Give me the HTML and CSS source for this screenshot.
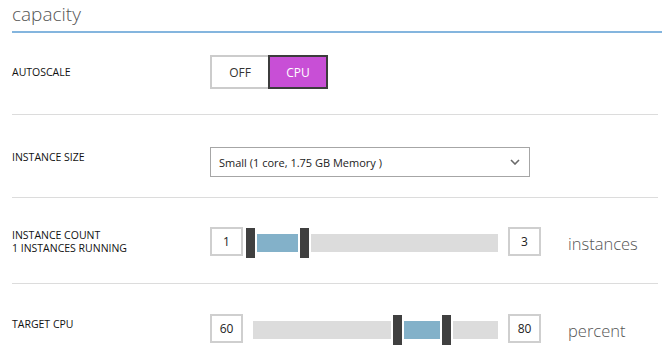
FILE: index.html
```html
<!DOCTYPE html>
<html lang="en">

<head>
    <meta charset="UTF-8">
    <meta name="viewport" content="width=device-width, initial-scale=1.0">
    <title>Capacity</title>
    <link rel="stylesheet" href="styles.css">
</head>

<body>
    <h1 class="section-title">capacity</h1>

    <div class="row row-autoscale">
        <div class="label">AUTOSCALE</div>
        <div class="toggle">
            <button class="toggle-option">OFF</button>
            <button class="toggle-option active">CPU</button>
        </div>
    </div>

    <div class="row row-size">
        <div class="label">INSTANCE SIZE</div>
        <div class="select">
            <span>Small (1 core, 1.75 GB Memory )</span>
            <svg class="chevron" width="10" height="6" viewBox="0 0 10 6">
                <path d="M1 1 L5 5 L9 1" fill="none" stroke="#6a6a6a" stroke-width="1.6" />
            </svg>
        </div>
    </div>

    <div class="row row-count">
        <div class="label">INSTANCE COUNT<br>1 INSTANCES RUNNING</div>
        <div class="range">
            <div class="range-value">1</div>
            <div class="range-track">
                <div class="range-fill" style="left: 4px; width: 41px"></div>
                <div class="range-handle" style="left: -7px"></div>
                <div class="range-handle" style="left: 47px"></div>
            </div>
            <div class="range-value">3</div>
            <div class="range-unit">instances</div>
        </div>
    </div>

    <div class="row row-cpu">
        <div class="label">TARGET CPU</div>
        <div class="range">
            <div class="range-value">60</div>
            <div class="range-track">
                <div class="range-fill" style="left: 151px; width: 36px"></div>
                <div class="range-handle" style="left: 140px"></div>
                <div class="range-handle" style="left: 189px"></div>
            </div>
            <div class="range-value">80</div>
            <div class="range-unit">percent</div>
        </div>
    </div>
</body>

</html>
```

FILE: styles.css
```css
body {
    margin: 0;
    font-family: "Open Sans", "Noto Sans", sans-serif;
    color: #333;
    background: #fff;
}

.section-title {
    margin: 0 0 0 12px;
    height: 31px;
    border-bottom: 2px solid #84b5de;
    font-size: 19px;
    font-weight: 300;
    line-height: 28px;
    color: #555;
}

.row {
    display: flex;
    margin: 0 4px 0 12px;
    border-bottom: 1px solid #dcdcdc;
}

.row-autoscale {
    align-items: center;
    padding: 22px 0 25px;
}

.row-size {
    padding: 32px 0 20px;
}

.row-count {
    padding: 29px 0 25px;
}

.row-cpu {
    padding: 30px 0 25px;
}

.label {
    width: 198px;
    flex: none;
    font-size: 10.5px;
    line-height: 13px;
    color: #111;
}

.row-size .label {
    padding-top: 4px;
}

.row-count .label {
    padding-top: 2px;
}

.row-cpu .label {
    padding-top: 4px;
}

/* toggle */

.toggle {
    display: flex;
    height: 34px;
}

.toggle-option {
    font-family: inherit;
    font-size: 12px;
    color: #333;
    background: #fff;
    border: 2px solid #cccccc;
    border-right: none;
    width: 58px;
    padding: 0;
    margin: 0;
}

.toggle-option.active {
    width: 60px;
    color: #fff;
    background: #c84fd6;
    border: 2px solid #3c3c3c;
}

/* dropdown */

.select {
    display: flex;
    align-items: center;
    justify-content: space-between;
    box-sizing: border-box;
    width: 320px;
    height: 30px;
    padding: 0 9px 0 8px;
    border: 1px solid #a6a6a6;
    font-size: 11px;
    color: #222;
}

/* range slider */

.range {
    display: flex;
    align-items: flex-start;
}

.range-value {
    box-sizing: border-box;
    width: 33px;
    height: 29px;
    border: 2px solid #cfcfcf;
    font-size: 12px;
    line-height: 25px;
    text-align: center;
    color: #222;
}

.range-track {
    position: relative;
    width: 245px;
    height: 30px;
    margin: 1px 10px 0;
}

.range-track::before {
    content: "";
    position: absolute;
    left: 0;
    right: 0;
    top: 6px;
    height: 18px;
    background: #dcdcdc;
}

.range-fill {
    position: absolute;
    top: 6px;
    height: 18px;
    background: #83b1c9;
}

.range-handle {
    position: absolute;
    top: 0;
    width: 9px;
    height: 30px;
    background: #404040;
    box-shadow: 0 0 0 2px #fff;
}

.range-unit {
    margin: 5px 0 0 27px;
    font-size: 16.5px;
    font-weight: 300;
    line-height: 24px;
    color: #555;
}
```
